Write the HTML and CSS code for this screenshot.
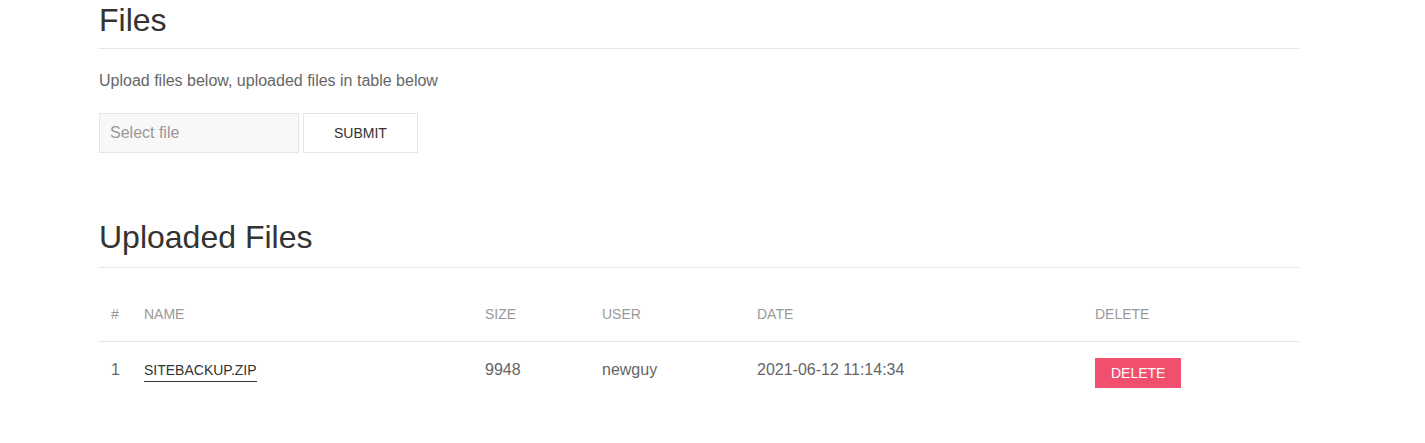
FILE: index.html
```html
<!DOCTYPE html>
<html>
<head>
<meta charset="utf-8">
<link rel="stylesheet" href="styles.css">
</head>
<body>
<div class="page">
  <h2 class="heading">Files</h2>
  <p class="intro">Upload files below, uploaded files in table below</p>
  <form class="upload">
    <input class="file-input" type="text" placeholder="Select file">
    <button class="btn-default" type="button">Submit</button>
  </form>

  <h2 class="heading heading-second">Uploaded Files</h2>
  <table class="files">
    <colgroup>
      <col class="c-num"><col class="c-name"><col class="c-size"><col class="c-user"><col class="c-date"><col class="c-del">
    </colgroup>
    <thead>
      <tr><th>#</th><th>Name</th><th>Size</th><th>User</th><th>Date</th><th>Delete</th></tr>
    </thead>
    <tbody>
      <tr>
        <td>1</td>
        <td><a class="btn-text" href="#">sitebackup.zip</a></td>
        <td>9948</td>
        <td>newguy</td>
        <td>2021-06-12 11:14:34</td>
        <td><button class="btn-danger" type="button">Delete</button></td>
      </tr>
    </tbody>
  </table>
</div>
</body>
</html>
```
FILE: styles.css
```css
html, body {
  margin: 0;
  padding: 0;
  background: #fff;
  font-family: "Liberation Sans", Arial, sans-serif;
  font-size: 16px;
  line-height: 1.5;
  color: #666;
}
.page {
  width: 1200px;
  margin-left: 99px;
}
.heading {
  margin: 0;
  font-size: 32px;
  font-weight: 400;
  line-height: 1.25;
  color: #333;
  padding-bottom: 8px;
  border-bottom: 1px solid #e5e5e5;
}
.heading-second {
  margin-top: 64px;
  padding-bottom: 10px;
}
.intro {
  margin: 20px 0 0;
}
.upload {
  margin-top: 20px;
  display: flex;
  gap: 4px;
}
.file-input {
  box-sizing: border-box;
  width: 200px;
  height: 40px;
  margin: 0;
  padding: 0 10px;
  background: #f8f8f8;
  border: 1px solid #e5e5e5;
  font-family: inherit;
  font-size: 16px;
  color: #666;
  outline: none;
}
.file-input::placeholder {
  color: #999;
}
.btn-default {
  box-sizing: border-box;
  height: 40px;
  margin: 0;
  padding: 0 30px;
  background: #fff;
  border: 1px solid #e5e5e5;
  font-family: inherit;
  font-size: 14px;
  line-height: 38px;
  text-transform: uppercase;
  color: #333;
}
.files {
  margin-top: 20px;
  width: 100%;
  border-collapse: collapse;
  border-spacing: 0;
  table-layout: fixed;
}
.c-num { width: 33px; }
.c-name { width: 341px; }
.c-size { width: 117px; }
.c-user { width: 155px; }
.c-date { width: 338px; }
.c-del { width: 216px; }
.files th {
  padding: 16px 12px 17px;
  text-align: left;
  font-weight: 400;
  font-size: 14px;
  line-height: 20px;
  text-transform: uppercase;
  color: #999;
  vertical-align: bottom;
}
.files tbody tr {
  border-top: 1px solid #e5e5e5;
}
.files td {
  padding: 16px 12px;
  vertical-align: top;
  color: #666;
  line-height: 24px;
}
.btn-text {
  display: inline-block;
  font-size: 14px;
  line-height: 21px;
  text-transform: uppercase;
  color: #333;
  text-decoration: none;
  border-bottom: 1px solid #333;
}
.btn-danger {
  margin: 0;
  padding: 0 16px;
  height: 30px;
  line-height: 30px;
  border: none;
  background: #f0506e;
  color: #fff;
  font-family: inherit;
  font-size: 14px;
  text-transform: uppercase;
}
```
